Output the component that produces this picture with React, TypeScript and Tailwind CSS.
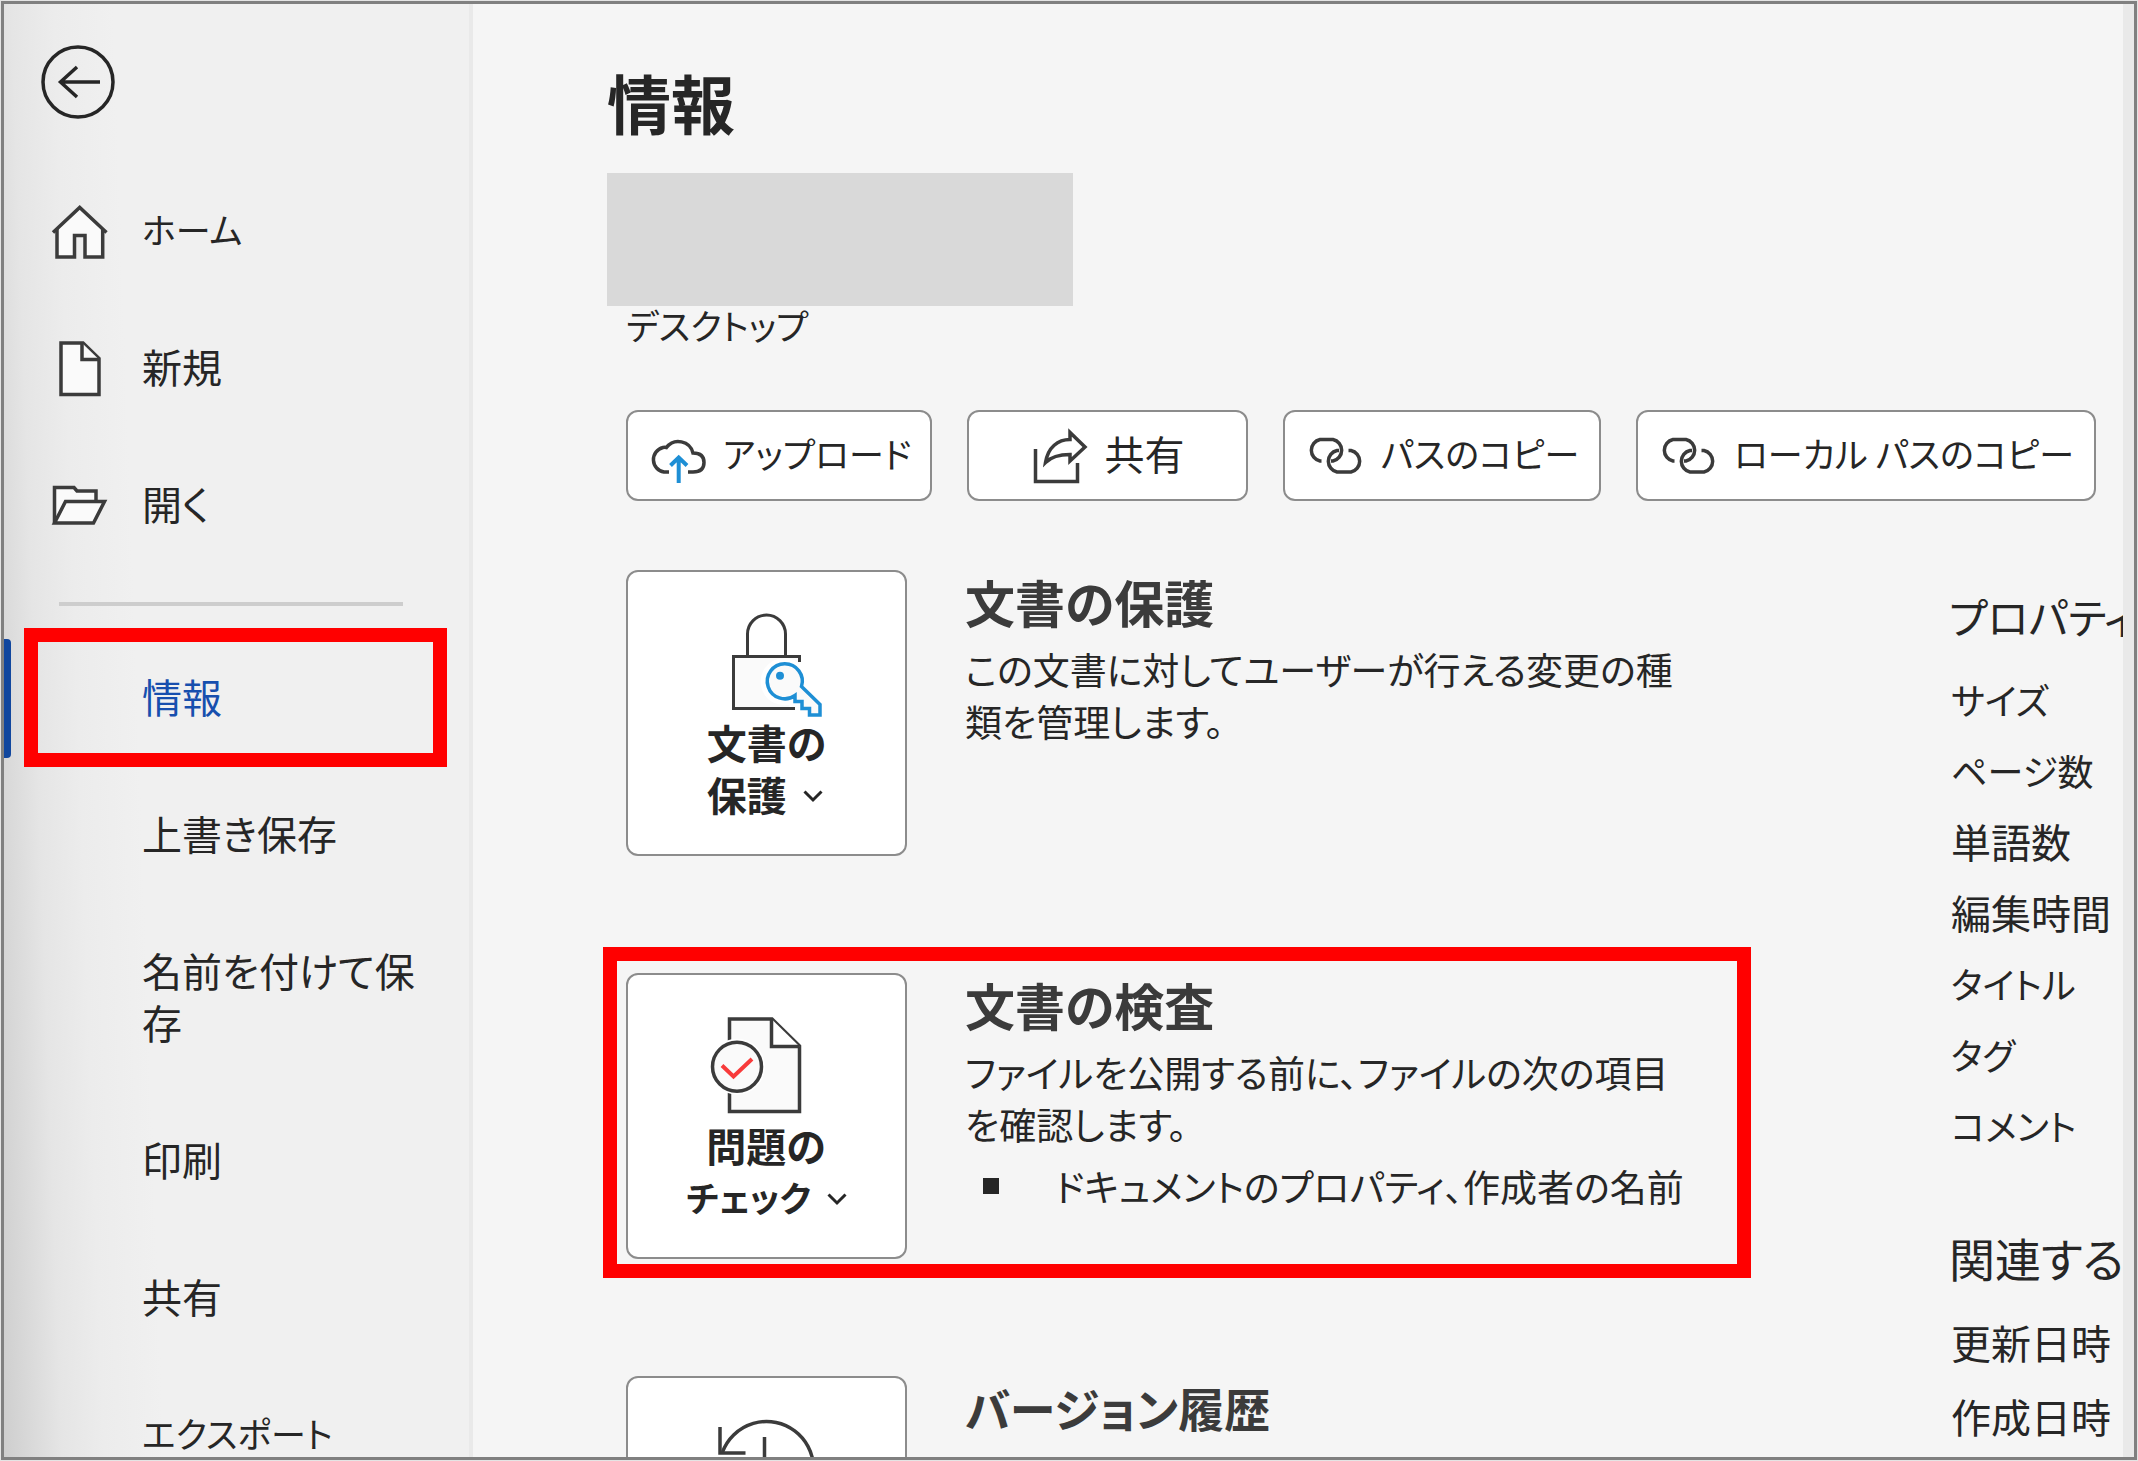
import type { ReactNode } from 'react'
import clsx from 'clsx'

const INK = '#3b3b3b'
const BLUE = '#1e8fd5'

const KANA_SIZE = 'text-[35px] leading-[52px]'
const isKana = (label: string) => /^[\u30a0-\u30ff\s]+$/.test(label)

type NavEntry = { label: string; icon?: ReactNode; current?: boolean }

/* Icons */

function BackIcon() {
  return (
    <svg viewBox="0 0 74 74" className="size-[74px]" fill="none" stroke="#262626" strokeWidth="3.5">
      <circle cx="37" cy="37" r="35" />
      <path d="M59 37H19M36 22L19.500 37L36 52" />
    </svg>
  )
}

function HomeIcon() {
  return (
    <svg viewBox="0 0 60 60" className="size-[60px]" fill="none" stroke={INK} strokeWidth="3.500">
      <path d="M7 28L29.700 7L53 28V55H35V33.500H24.500V55H7Z" fill="#fafafa" stroke="none" />
      <path d="M3 30.500L29.700 5.500L56.500 30.500" />
      <path d="M7 27V55H24.500V33.500H35V55H52.700V27" />
    </svg>
  )
}

function NewIcon() {
  return (
    <svg viewBox="0 0 60 60" className="size-[60px]" fill="#fafafa" stroke={INK} strokeWidth="3.500">
      <path d="M11 4H33L49 19.500V55.500H11Z" />
      <path d="M32 4V20.500H49" />
    </svg>
  )
}

function OpenIcon() {
  return (
    <svg viewBox="0 0 60 60" className="size-[60px]" fill="#fafafa" stroke={INK} strokeWidth="3.500">
      <path d="M46 25V15H27L24 11.500H4.500V47" />
      <path d="M4.500 47L15.500 25.500H54.500L43.500 47Z" />
    </svg>
  )
}

function UploadIcon() {
  return (
    <svg viewBox="0 0 60 58" className="h-[58px] w-[60px] shrink-0" fill="none" stroke={INK} strokeWidth="3.500">
      <path d="M22 45H17A12.500 12.500 0 0 1 16 20.500Q18 20 19.500 20.500A15 15 0 0 1 46 26Q57 26 57 35.500T46 45H41" />
      <path d="M31.700 56V31M23.500 38.500L31.700 30.500L40 38.500" stroke={BLUE} strokeWidth="4" />
    </svg>
  )
}

function ShareIcon() {
  return (
    <svg viewBox="0 0 58 58" className="size-[58px] shrink-0" fill="none" stroke={INK} strokeWidth="3.500">
      <path d="M4.500 22V54.500H46.500V36" />
      <path d="M14.500 35.500C17 20 27 12.500 39 12.500V5.500L54 20L39 34V27.500C28 27.500 20 30 14.500 35.500Z" />
    </svg>
  )
}

function LinkIcon() {
  return (
    <svg viewBox="0 0 60 58" className="h-[58px] w-[60px] shrink-0" fill="none" stroke={INK} strokeWidth="3.500">
      <path d="M16.500 34H15A11 11 0 0 1 15 12.500H28A11 11 0 0 1 28 34H26" />
      <path d="M34 23.500H32A11 11 0 0 0 32 45H46A11 11 0 0 0 46 23.500H43.500" />
    </svg>
  )
}

function LockKeyIcon() {
  return (
    <svg viewBox="0 0 120 107" className="h-[107px] w-[120px]" fill="none" stroke={INK} strokeWidth="3">
      <path d="M27 45H92V96H27Z" fill="#fafafa" stroke="none" />
      <path d="M92.500 50V44.500H26.500V96.500H88" />
      <path d="M40.500 44V22A19 19 0 0 1 78.500 22V44" />
      <path
        d="M88 84A18 18 0 1 1 94.500 74.500L113 92.500V103H102.500V96.500H95V89.500H88Z"
        fill="#fff"
        stroke="#fff"
        strokeWidth="11"
      />
      <path
        d="M88 83.500A17.500 17.500 0 1 1 94.500 74.500L113 92.500V103H102.500V96.500H95V89.500H88Z"
        fill="#fafafa"
        stroke={BLUE}
        strokeWidth="3.500"
      />
      <circle cx="73" cy="63.700" r="4" fill={BLUE} stroke="none" />
    </svg>
  )
}

function InspectIcon() {
  return (
    <svg viewBox="0 0 120 107" className="h-[107px] w-[120px]" fill="none" stroke={INK} strokeWidth="3.500">
      <path d="M22.500 4H65L92.500 31V96.500H22.500Z" fill="#fafafa" />
      <path d="M64.500 4V31.500H92.500" fill="#fff" />
      <circle cx="30" cy="51.700" r="28" fill="#fff" stroke="none" />
      <circle cx="30" cy="51.700" r="24.500" fill="#fafafa" />
      <path d="M15 50.500L26.500 61.500L45 44" stroke="#f83b3b" strokeWidth="4" />
    </svg>
  )
}

function HistoryIcon() {
  return (
    <svg viewBox="0 0 120 107" className="h-[107px] w-[120px]" fill="none" stroke={INK} strokeWidth="3.500">
      <path d="M15.500 34A47 47 0 1 1 15.500 67" />
      <path d="M13 9V35H38.500M57.500 19V54H80" />
    </svg>
  )
}

function Chevron() {
  return (
    <svg viewBox="0 0 20 22" className="ml-4 inline-block h-[22px] w-5 align-middle" fill="none" stroke="#262626" strokeWidth="3">
      <path d="M1.500 2.500L10 11L18.500 2.500" />
    </svg>
  )
}

/* Red frame drawn over the part that the reader should look at */
function Callout({ className }: { className: string }) {
  return <div aria-hidden="true" className={clsx('pointer-events-none absolute border-[14px] border-[#ff0000]', className)} />
}

const topNav: NavEntry[] = [
  { label: 'ホーム', icon: <HomeIcon /> },
  { label: '新規', icon: <NewIcon /> },
  { label: '開く', icon: <OpenIcon /> },
]

const fileNav: NavEntry[] = [
  { label: '情報', current: true },
  { label: '上書き保存' },
  { label: '名前を付けて保存' },
  { label: '印刷' },
  { label: '共有' },
  { label: 'エクスポート' },
]

const properties = ['サイズ', 'ページ数', '単語数', '編集時間', 'タイトル', 'タグ', 'コメント']
const relatedDates = ['更新日時', '作成日時']

function NavItem({ label, icon, current }: NavEntry) {
  return (
    <li className="relative">
      <button
        type="button"
        aria-current={current ? 'page' : undefined}
        className={clsx(
          'flex w-full items-center gap-8 pt-10 pr-7 pb-[45px] pl-[46px] text-left',
          current && 'text-[#174fae]',
        )}
      >
        <span className="-mt-px -mb-[7px] w-[60px] shrink-0">{icon}</span>
        <span className={clsx(isKana(label) && KANA_SIZE)}>{label}</span>
      </button>
      {current && (
        <>
          <span className="absolute top-[9px] bottom-[9px] left-0 w-[7px] rounded-r-sm bg-[#11479e]" />
          <Callout className="-top-0.5 right-[22px] bottom-0 left-5" />
        </>
      )}
    </li>
  )
}

function Sidebar() {
  return (
    <aside className="w-[469px] shrink-0 border-r-4 border-[#e9e9e9] bg-[linear-gradient(88deg,#cecece_0px,#dadada_30px,#e5e5e5_58px,#ececec_100px,#f0f0f0_160px)] pt-[41px]">
      <button type="button" aria-label="戻る" className="mb-11 ml-[37px] block">
        <BackIcon />
      </button>
      <nav>
        <ul>
          {topNav.map((entry) => (
            <NavItem key={entry.label} {...entry} />
          ))}
        </ul>
        <hr className="mt-7 mr-[66px] mb-6 ml-[55px] border-t-4 border-[#cdcdcd]" />
        <ul>
          {fileNav.map((entry) => (
            <NavItem key={entry.label} {...entry} />
          ))}
        </ul>
      </nav>
    </aside>
  )
}

function ActionButton({ icon, label, className }: { icon: ReactNode; label: string; className: string }) {
  return (
    <button
      type="button"
      className={clsx(
        'flex h-[91px] shrink-0 items-center justify-center gap-4 rounded-xl border-2 border-[#8c8c8c] bg-white whitespace-nowrap',
        className,
      )}
    >
      {icon}
      <span className={clsx('pb-1.5', label !== '共有' && KANA_SIZE)}>{label}</span>
    </button>
  )
}

type SectionProps = {
  icon: ReactNode
  title: string
  buttonLabel?: [string, string]
  highlighted?: boolean
  children?: ReactNode
}

function Section({ icon, title, buttonLabel, highlighted, children }: SectionProps) {
  return (
    <section className="relative flex h-[286px] shrink-0 gap-[58px]">
      <button
        type="button"
        aria-label={buttonLabel ? undefined : title}
        className="flex w-[281px] shrink-0 flex-col items-center rounded-xl border-2 border-[#8c8c8c] bg-white pt-10 font-bold"
      >
        {icon}
        {buttonLabel && (
          <span className="-mt-[3px] text-left">
            <span className={clsx('block', highlighted && 'pl-5')}>{buttonLabel[0]}</span>
            <span className={clsx('block', isKana(buttonLabel[1]) && KANA_SIZE)}>
              {buttonLabel[1]}
              <Chevron />
            </span>
          </span>
        )}
      </button>
      <div className="-mt-px text-[37px] leading-[52px] whitespace-nowrap">
        <h2
          className={clsx(
            'mb-2.5 leading-[64px] font-bold text-[#3b3b3b]',
            title.startsWith('文書') ? 'text-[50px]' : 'text-[46px]',
          )}
        >
          {title}
        </h2>
        {children}
      </div>
      {highlighted && <Callout className="-top-[26px] right-0 -bottom-[19px] -left-[23px]" />}
    </section>
  )
}

function PropertyList({ title, items, className }: { title: string; items: string[]; className: string }) {
  return (
    <div>
      <h3 className={clsx('mb-4 -ml-0.5 leading-[64px]', isKana(title) ? 'text-[42px]' : 'text-[46px]')}>{title}</h3>
      <ul className={className}>
        {items.map((item) => (
          <li key={item} className={clsx(/^[\u30a0-\u30ff]/.test(item) && 'text-[36px]')}>
            {item}
          </li>
        ))}
      </ul>
    </div>
  )
}

export default function App() {
  return (
    <div
      lang="ja"
      className="h-screen bg-[#e4e4e4] p-px font-['Noto_Sans_CJK_JP',sans-serif] text-[40px] leading-[52px] text-[#262626] [font-feature-settings:'palt']"
    >
      <div className="flex h-full overflow-hidden border-3 border-[#808080] bg-[#f5f5f5]">
        <Sidebar />
        <main className="min-w-0 flex-1 overflow-hidden pt-[57px] pl-[134px]">
          <h1 className="text-[64px] leading-[80px] font-bold">情報</h1>
          <div className="mt-8 h-[133px] w-[466px] bg-[#d9d9d9]" />
          <div className="pl-[19px]">
            <p className="text-[35px] leading-[38px]">デスクトップ</p>
            <div className="mt-[66px] flex gap-[35px]">
              <ActionButton icon={<UploadIcon />} label="アップロード" className="w-[306px]" />
              <ActionButton icon={<ShareIcon />} label="共有" className="w-[281px]" />
              <ActionButton icon={<LinkIcon />} label="パスのコピー" className="w-[318px]" />
              <ActionButton icon={<LinkIcon />} label="ローカル パスのコピー" className="w-[460px]" />
            </div>
            <div className="mt-[69px] flex">
              <div className="flex min-w-0 flex-1 flex-col gap-[117px] pr-[198px]">
                <Section icon={<LockKeyIcon />} title="文書の保護" buttonLabel={['文書の', '保護']}>
                  <p>
                    この文書に対してユーザーが行える変更の種
                    <br />
                    類を管理します。
                  </p>
                </Section>
                <Section icon={<InspectIcon />} title="文書の検査" buttonLabel={['問題の', 'チェック']} highlighted>
                  <p>
                    ファイルを公開する前に、ファイルの次の項目
                    <br />
                    を確認します。
                  </p>
                  <ul className="mt-2.5 ml-[18px]">
                    <li className="flex items-center gap-14">
                      <span className="size-4 bg-[#262626]" />
                      ドキュメントのプロパティ、作成者の名前
                    </li>
                  </ul>
                </Section>
                <Section icon={<HistoryIcon />} title="バージョン履歴" />
              </div>
              <div className="flex w-[174px] shrink-0 flex-col gap-16 overflow-hidden pt-3.5 pl-0.5 whitespace-nowrap">
                <PropertyList title="プロパティ" items={properties} className="leading-[71px]" />
                <PropertyList title="関連する日付" items={relatedDates} className="leading-[74px]" />
              </div>
            </div>
          </div>
        </main>
        <div className="w-[11px] shrink-0 bg-[#e9e9e9]" />
      </div>
    </div>
  )
}
